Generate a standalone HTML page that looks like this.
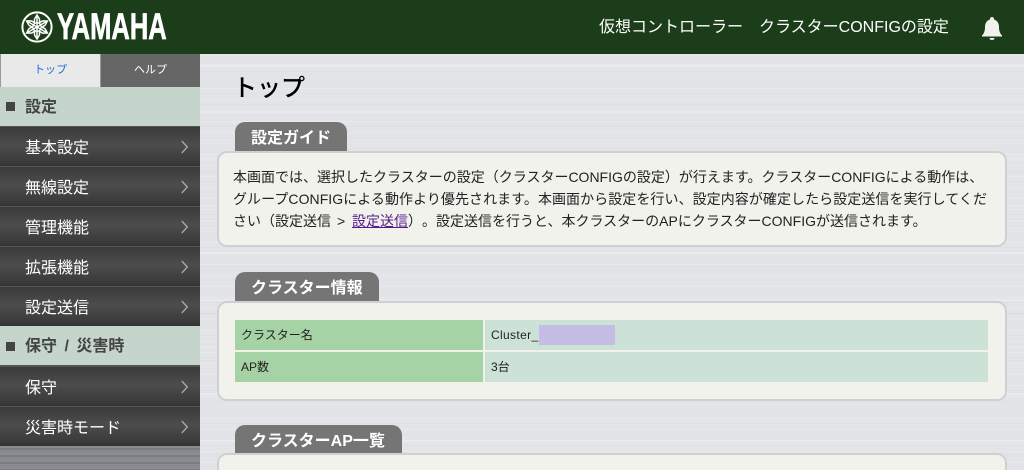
<!DOCTYPE html>
<html lang="ja"><head><meta charset="utf-8"><title>トップ</title>
<style>
*{box-sizing:border-box;text-spacing-trim:space-all}
html,body{margin:0;padding:0;width:1024px;height:470px;overflow:hidden}
body{position:relative;font-family:"Liberation Sans","Noto Sans CJK JP",sans-serif;color:#222;background-color:#e2e4e8;
background-image:repeating-linear-gradient(180deg,rgba(255,255,255,.14) 0 1px,transparent 1px 5px,rgba(190,195,205,.1) 5px 6px,transparent 6px 11px),repeating-linear-gradient(180deg,transparent 0 17px,rgba(255,255,255,.2) 17px 19px,transparent 19px 31px,rgba(190,195,205,.14) 31px 32px,transparent 32px 47px)}
.a{position:absolute;white-space:nowrap}
#hd{left:0;top:0;width:1024px;height:54px;background:#1c3d1a}
#side{left:0;top:54px;width:200px;height:416px;background:repeating-linear-gradient(180deg,#8b8d93 0 2px,#7b7d83 2px 4px,#888a90 4px 7px)}
.sec{left:0;width:200px;height:40px;background:#c5d5cc;color:#444;font-size:16px;font-weight:700;line-height:41px;padding-left:25px;border-bottom:1px solid #555}
.sec i{position:absolute;left:6px;top:15px;width:9px;height:9px;background:#444}
.it{left:0;width:200px;height:40px;background:linear-gradient(180deg,#3a3a3a 0,#4c4c4c 45%,#3b3b3b 90%,#333 100%);border-top:1px solid #555;color:#fff;font-size:16px;line-height:43px;padding-left:25px}
.it svg{position:absolute;left:181px;top:13px}
.tabh{left:235px;height:30px;background:#757575;border-radius:10px 10px 0 0;color:#fff;font-weight:700;font-size:16px;line-height:33px;padding-left:16px}
.panel{left:217px;width:790px;background:#f1f2ec;border:2px solid #cfd0d4;border-radius:10px}
.tx{left:233px;font-size:14px;line-height:22px;color:#222}
.th{left:235px;width:248px;height:30px;background:#a5d3a5;font-size:12px;line-height:30px;padding-left:6px;color:#222}
.td{left:485px;width:503px;height:30px;background:#cde2d6;font-size:12px;line-height:30px;padding-left:6px;color:#222}
.l{letter-spacing:.35px}
a{color:#551a8b}
</style></head><body>
<div class="a" id="hd">
<svg class="a" style="left:21px;top:11px" width="32" height="32" viewBox="0 0 32 32" fill="none" stroke="#fff"><circle cx="16" cy="16" r="14.6" stroke-width="2"/><g stroke-width="1.5"><path d="M16 16V5M13.500 8L16 4l2.500 4M13.500 8v4h5V8"/><path d="M16 16V5M13.500 8L16 4l2.500 4M13.500 8v4h5V8" transform="rotate(60 16 16)"/><path d="M16 16V5M13.500 8L16 4l2.500 4M13.500 8v4h5V8" transform="rotate(120 16 16)"/><path d="M16 16V5M13.500 8L16 4l2.500 4M13.500 8v4h5V8" transform="rotate(180 16 16)"/><path d="M16 16V5M13.500 8L16 4l2.500 4M13.500 8v4h5V8" transform="rotate(240 16 16)"/><path d="M16 16V5M13.500 8L16 4l2.500 4M13.500 8v4h5V8" transform="rotate(300 16 16)"/></g></svg>
<div class="a" style="left:57px;top:6px;font-size:37px;line-height:42px;font-weight:700;color:#fff;-webkit-text-stroke:.7px #fff;transform-origin:0 0;transform:scaleX(.69)">YAMAHA</div>
<div class="a" style="left:599px;top:16px;font-size:16px;line-height:24px;color:#fff">仮想コントローラー</div>
<div class="a" style="left:759px;top:16px;font-size:16px;line-height:24px;color:#fff">クラスターCONFIGの設定</div>
<svg class="a" style="left:981px;top:16px" width="22" height="26" viewBox="0 0 22 26"><path fill="#f1f2ec" d="M11 1c1.200 0 2 .8 2 2v.5c3.500 1 5 4 5 7.500 0 4 1 6.500 3 8.500v1H1v-1c2-2 3-4.500 3-8.500 0-3.500 1.500-6.500 5-7.500V3c0-1.200.8-2 2-2zM8.500 22h5c0 1.200-1 2-2.500 2s-2.500-.8-2.500-2z"/></svg>
</div>
<div class="a" id="side"></div>
<div class="a" style="left:0;top:54px;width:101px;height:33px;background:#e9e9e9;border-left:1px solid #999;border-right:1px solid #999;color:#1a6fd8;font-size:11px;line-height:33px;text-align:center">トップ</div>
<div class="a" style="left:101px;top:54px;width:99px;height:33px;background:#666;color:#fff;font-size:11px;line-height:33px;text-align:center">ヘルプ</div>
<div class="a sec" style="top:87px"><i></i>設定</div>
<div class="a it" style="top:126px">基本設定<svg width="8" height="14" viewBox="0 0 8 14" fill="none" stroke="#aaa" stroke-width="1.300"><path d="M.8 1l5.500 6-5.500 6"/></svg></div>
<div class="a it" style="top:166px">無線設定<svg width="8" height="14" viewBox="0 0 8 14" fill="none" stroke="#aaa" stroke-width="1.300"><path d="M.8 1l5.500 6-5.500 6"/></svg></div>
<div class="a it" style="top:206px">管理機能<svg width="8" height="14" viewBox="0 0 8 14" fill="none" stroke="#aaa" stroke-width="1.300"><path d="M.8 1l5.500 6-5.500 6"/></svg></div>
<div class="a it" style="top:246px">拡張機能<svg width="8" height="14" viewBox="0 0 8 14" fill="none" stroke="#aaa" stroke-width="1.300"><path d="M.8 1l5.500 6-5.500 6"/></svg></div>
<div class="a it" style="top:286px">設定送信<svg width="8" height="14" viewBox="0 0 8 14" fill="none" stroke="#aaa" stroke-width="1.300"><path d="M.8 1l5.500 6-5.500 6"/></svg></div>
<div class="a sec" style="top:326px"><i style="top:16px"></i>保守<span style="word-spacing:3px"> / </span>災害時</div>
<div class="a it" style="top:366px">保守<svg width="8" height="14" viewBox="0 0 8 14" fill="none" stroke="#aaa" stroke-width="1.300"><path d="M.8 1l5.500 6-5.500 6"/></svg></div>
<div class="a it" style="top:406px">災害時モード<svg width="8" height="14" viewBox="0 0 8 14" fill="none" stroke="#aaa" stroke-width="1.300"><path d="M.8 1l5.500 6-5.500 6"/></svg></div>

<div class="a" style="left:233px;top:71px;font-size:24px;line-height:36px;color:#000;font-weight:500">トップ</div>

<div class="a tabh" style="top:122px;width:112px">設定ガイド</div>
<div class="a panel" style="top:151px;height:96px"></div>
<div class="a tx" style="top:166px">本画面では、選択したクラスターの設定（クラスターCONFIGの設定）が行えます。クラスターCONFIGによる動作は、</div>
<div class="a tx" style="top:188px;word-spacing:0;letter-spacing:.06px">グループCONFIGによる動作より優先されます。本画面から設定を行い、設定内容が確定したら設定送信を実行してくだ</div>
<div class="a tx" style="top:210px">さい（設定送信<span style="position:absolute;left:104px">&gt;</span><a href="#" style="position:absolute;left:119px">設定送信</a><span style="position:absolute;left:175px">）。設定送信を行うと、本クラスターのAPにクラスターCONFIGが送信されます。</span></div>

<div class="a tabh" style="top:272px;width:144px">クラスター情報</div>
<div class="a panel" style="top:301px;height:100px"></div>
<div class="a th" style="top:320px">クラスター名</div>
<div class="a td" style="top:320px"><span class="l">Cluster_</span></div>
<div class="a" style="left:539px;top:325px;width:76px;height:20px;background:#c5bde6"></div>
<div class="a th" style="top:352px">AP数</div>
<div class="a td" style="top:352px">3台</div>

<div class="a tabh" style="top:425px;width:167px;height:29px">クラスターAP一覧</div>
<div class="a panel" style="top:453px;height:40px"></div>
</body></html>
